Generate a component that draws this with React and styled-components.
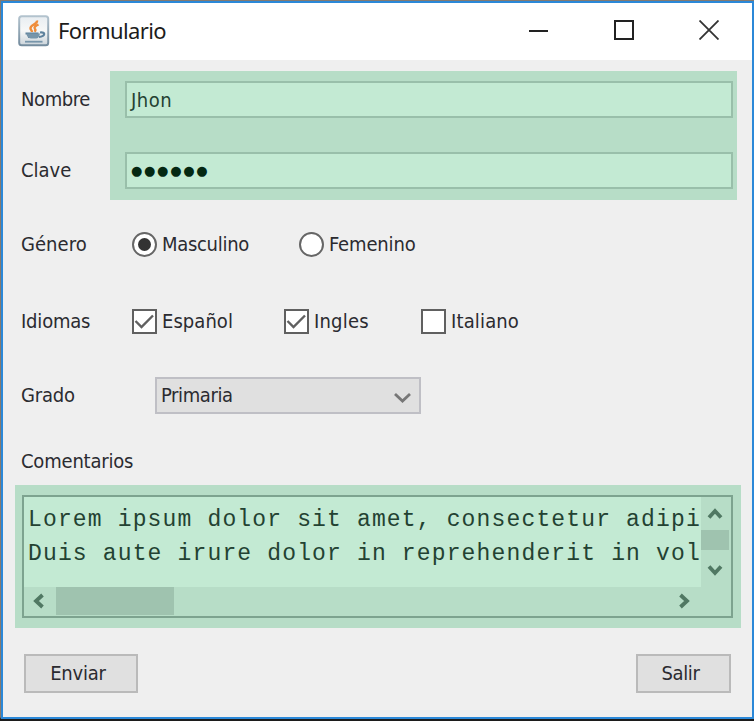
import styled, { createGlobalStyle } from 'styled-components'
import { useState } from 'react'

const GlobalStyle = createGlobalStyle`
    * { box-sizing: border-box; }
    body {
        margin: 0;
        background: #efefef;
    }
`
const Desktop = styled.div`
    width: 754px;
    height: 721px;
    padding: 1px 0 2px 1px;
    background: linear-gradient(#857a70 0 717px, #1c1c1c 719px);
    overflow: hidden;
`
const Window = styled.div`
    width: 753px;
    height: 718px;
    display: flex;
    flex-direction: column;
    border: 2px solid #2b88d8;
    background: #efefef;
    color: #2b2b30;
    font-family: "DejaVu Sans Condensed", "DejaVu Sans", sans-serif;
    font-stretch: condensed;
    font-size: 20px;
    line-height: 24px;
`
const TitleBar = styled.header`
    display: flex;
    align-items: center;
    height: 57px;
    flex: none;
    padding: 0 33px 2px 15px;
    background: #fff;
`
const Title = styled.h1`
    flex: 1;
    margin: -1px 0 0 8px;
    font: 400 22px/30px "Noto Sans", sans-serif;
    letter-spacing: -0.6px;
    color: #1c1c1c;
`
const WindowControls = styled.div`
    display: flex;
    gap: 65px;
    margin-top: -2px;
`
const Text = styled.span`
    white-space: nowrap;
    letter-spacing: ${({ $spacing }) => $spacing || 0}px;
`
const Credentials = styled.section`
    display: flex;
    height: 129px;
    margin: 11px 15px 0 18px;
    flex: none;
`
const LabelColumn = styled.div`
    width: 89px;
    flex: none;
    display: flex;
    flex-direction: column;
    gap: 47px;
    padding-top: 16px;
`
const FieldColumn = styled.div`
    flex: 1;
    display: flex;
    flex-direction: column;
    gap: 34px;
    padding: 10px 4px 0 15px;
    background: #b7ddc7;
`
const Field = styled.div`
    display: flex;
    align-items: center;
    height: 37px;
    padding-left: 4px;
    border: 2px solid #99bfaa;
    background: #c3ead3;
    color: #234232;
`
const Dots = styled.span`
    font: 13px/20px "DejaVu Sans", sans-serif;
    letter-spacing: 1.7px;
    color: #042812;
`
const FormRow = styled.div`
    display: flex;
    align-items: center;
    flex: none;
    height: 38px;
    margin-top: ${({ $top }) => $top}px;
    padding-left: 18px;
`
const RowLabel = styled.div`
    width: ${({ $width }) => $width}px;
    flex: none;
`
const Option = styled.div`
    display: flex;
    align-items: center;
    gap: 5px;
    width: ${({ $width }) => $width}px;
    cursor: pointer;
`
const Radio = styled.span`
    display: flex;
    align-items: center;
    justify-content: center;
    width: 25px;
    height: 25px;
    flex: none;
    border: 2px solid #666;
    border-radius: 50%;
    background: #fff;

    &::after {
        content: '';
        width: 13px;
        height: 13px;
        border-radius: 50%;
        background: ${({ $checked }) => $checked ? '#333' : 'transparent'};
    }
`
const Check = styled.span`
    display: flex;
    width: 25px;
    height: 25px;
    flex: none;
    border: 2px solid #606060;
    background: #fff;
`
const Select = styled.div`
    display: flex;
    align-items: center;
    justify-content: space-between;
    width: 266px;
    height: 37px;
    padding: 0 8px 0 4px;
    border: 2px solid #bfbfc5;
    background: #e0e0e0;
`
const CommentHighlight = styled.section`
    height: 143px;
    flex: none;
    margin: 5px 11px 0 12px;
    padding: 10px 8px 10px 7px;
    background: #b7ddc7;
`
const CommentBox = styled.div`
    display: grid;
    grid-template-columns: 1fr 30px;
    grid-template-rows: 90px 1fr;
    height: 123px;
    border: 2px solid #7da38f;
`
const CommentText = styled.pre`
    margin: 0;
    padding: 7px 0 0 4px;
    overflow: hidden;
    background: #c3ead3;
    color: #234232;
    font: 23px/33.5px "Liberation Mono", monospace;
    letter-spacing: 1.15px;
`
const VerticalBar = styled.div`
    display: flex;
    flex-direction: column;
    align-items: center;
    width: 28px;
    padding-top: 8px;
`
const HorizontalBar = styled.div`
    display: flex;
    align-items: center;
    height: 28px;
    padding: 0 8px 0 6px;
`
const ThumbY = styled.div`
    width: 28px;
    height: 20px;
    margin: 7px 0 11px;
    background: #9fc3af;
`
const ThumbX = styled.div`
    width: 118px;
    height: 28px;
    margin: 0 auto 0 8px;
    background: #9fc3af;
`
const Footer = styled.footer`
    display: flex;
    justify-content: space-between;
    padding: 26px 21px 0 21px;
`
const Button = styled.button`
    width: ${({ $width }) => $width}px;
    height: 39px;
    padding: 0 6px 2px 0;
    border: 2px solid #bababa;
    background: #e0e0e0;
    color: inherit;
    font: inherit;
`

const JavaIcon = () => (
    <svg width="32" height="32" viewBox="0 0 32 32" fill="none">
        <defs>
            <linearGradient id="tile" x1="0" y1="0" x2="0" y2="1">
                <stop offset="0" stopColor="#e8edf1" />
                <stop offset=".5" stopColor="#f7f8f8" />
                <stop offset="1" stopColor="#cbd4da" />
            </linearGradient>
            <linearGradient id="edge" x1="0" y1="0" x2="0" y2="1">
                <stop offset="0" stopColor="#b3c3ce" />
                <stop offset="1" stopColor="#748c9e" />
            </linearGradient>
        </defs>
        <rect x="1.2" y="1.2" width="29" height="29" rx="2.5" fill="url(#tile)" stroke="url(#edge)" strokeWidth="2" />
        <path d="M19 5.5c1 3.500-7 4.500-6.500 8 .2 1.500 1.500 2 1.500 3.500M20.500 9.500c-3 1.500-5 2.500-3.500 4.500.8 1 .2 2-.6 2.700" stroke="#ef8d3b" strokeWidth="2.400" />
        <path d="M7.500 18.500h13M10 22h10M22 17.500c6-1 5.500 4-1 4.500" stroke="#5e829d" strokeWidth="2.200" />
        <path d="M8.500 18.500c0 2 1.500 5 4.500 5h5c2 0 3.500-2 4-5z" fill="#7795aa" />
        <path d="M7 26.700h17.500" stroke="#7795aa" strokeWidth="1.800" />
    </svg>
)

const arrows = {
    up: 'M3 12.500 9 6 15 12.500',
    down: 'M3 5.500 9 12 15 5.500',
    left: 'M12.500 3 6 9 12.500 15',
    right: 'M5.500 3 12 9 5.500 15',
}

const Arrow = ({ dir }) => (
    <svg width="18" height="18" viewBox="0 0 18 18" fill="none" stroke="#507863" strokeWidth="3.800">
        <path d={arrows[dir]} />
    </svg>
)

const genders = [
    { name: 'Masculino', width: 167, spacing: -0.3 },
    { name: 'Femenino', width: 130, spacing: -0.15 },
]

const languages = [
    { name: 'Español', width: 152, spacing: 0.05 },
    { name: 'Ingles', width: 137, spacing: 0.2 },
    { name: 'Italiano', width: 120, spacing: 0.15 },
]

const App = () => {
    const [gender, setGender] = useState('Masculino')
    const [selected, setSelected] = useState(['Español', 'Ingles'])

    const toggleLanguage = (name) => {
        setSelected(selected.includes(name) ? selected.filter(l => l !== name) : [...selected, name])
    }

    return (
        <Desktop>
            <GlobalStyle />
            <Window>
                <TitleBar>
                    <JavaIcon />
                    <Title>Formulario</Title>
                    <WindowControls>
                        <svg width="20" height="20" stroke="#222" strokeWidth="2"><path d="M0 11h19" /></svg>
                        <svg width="20" height="20" stroke="#222" strokeWidth="2" fill="none"><rect x="1" y="1" width="18" height="18" /></svg>
                        <svg width="20" height="20" stroke="#333" strokeWidth="1.800"><path d="M.5.500 19.500 19.500M19.500.500.500 19.500" /></svg>
                    </WindowControls>
                </TitleBar>
                <Credentials>
                    <LabelColumn>
                        <Text $spacing={-0.4}>Nombre</Text>
                        <Text $spacing={0}>Clave</Text>
                    </LabelColumn>
                    <FieldColumn>
                        <Field><Text $spacing={0.5}>Jhon</Text></Field>
                        <Field><Dots>●●●●●●</Dots></Field>
                    </FieldColumn>
                </Credentials>
                <FormRow $top={25}>
                    <RowLabel $width={111}><Text $spacing={0.05}>Género</Text></RowLabel>
                    {genders.map(({ name, width, spacing }) =>
                        <Option key={name} $width={width} onClick={() => setGender(name)}>
                            <Radio $checked={gender === name} />
                            <Text $spacing={spacing}>{name}</Text>
                        </Option>)}
                </FormRow>
                <FormRow $top={39}>
                    <RowLabel $width={111}><Text $spacing={-0.2}>Idiomas</Text></RowLabel>
                    {languages.map(({ name, width, spacing }) =>
                        <Option key={name} $width={width} onClick={() => toggleLanguage(name)}>
                            <Check>
                                {selected.includes(name) &&
                                    <svg width="21" height="21" fill="none" stroke="#606060" strokeWidth="2.400">
                                        <path d="M1.500 10 7.500 16 19 4.500" />
                                    </svg>
                                }
                            </Check>
                            <Text $spacing={spacing}>{name}</Text>
                        </Option>)}
                </FormRow>
                <FormRow $top={36}>
                    <RowLabel $width={134}><Text $spacing={-0.2}>Grado</Text></RowLabel>
                    <Select>
                        <Text $spacing={-0.4}>Primaria</Text>
                        <svg width="17" height="17" fill="none" stroke="#777" strokeWidth="2.800">
                            <path d="M1 7 8.500 14 16 7" />
                        </svg>
                    </Select>
                </FormRow>
                <FormRow $top={28}>
                    <Text $spacing={-0.2}>Comentarios</Text>
                </FormRow>
                <CommentHighlight>
                    <CommentBox>
                        <CommentText>{'Lorem ipsum dolor sit amet, consectetur adipi\nDuis aute irure dolor in reprehenderit in vol'}</CommentText>
                        <VerticalBar>
                            <Arrow dir="up" />
                            <ThumbY />
                            <Arrow dir="down" />
                        </VerticalBar>
                        <HorizontalBar>
                            <Arrow dir="left" />
                            <ThumbX />
                            <Arrow dir="right" />
                        </HorizontalBar>
                    </CommentBox>
                </CommentHighlight>
                <Footer>
                    <Button $width={114}><Text $spacing={-0.2}>Enviar</Text></Button>
                    <Button $width={95}><Text $spacing={-0.4}>Salir</Text></Button>
                </Footer>
            </Window>
        </Desktop>
    )
}

export default App
